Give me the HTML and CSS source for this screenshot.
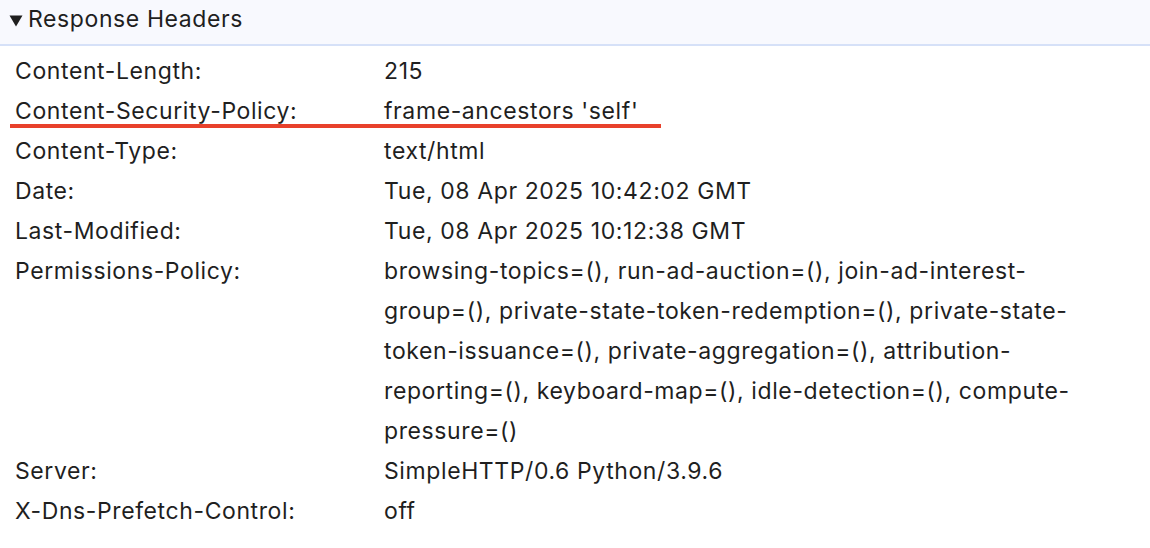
FILE: index.html
```html
<!DOCTYPE html>
<html>
<head>
<meta charset="utf-8">
<link rel="stylesheet" href="styles.css">
</head>
<body>
<section class="panel">
  <div class="panel-header">
    <svg class="caret" width="14" height="12" viewBox="0 0 14 12"><path d="M0.5 0.5 H13.5 L7 11.5 Z" fill="#1f1f1f"/></svg>
    <span class="panel-title">Response Headers</span>
  </div>
  <div class="rows">
    <div class="row"><div class="key">Content-Length:</div><div class="val">215</div></div>
    <div class="row marked"><div class="key">Content-Security-Policy:</div><div class="val">frame-ancestors 'self'</div></div>
    <div class="row"><div class="key">Content-Type:</div><div class="val">text/html</div></div>
    <div class="row"><div class="key">Date:</div><div class="val">Tue, 08 Apr 2025 10:42:02 GMT</div></div>
    <div class="row"><div class="key">Last-Modified:</div><div class="val">Tue, 08 Apr 2025 10:12:38 GMT</div></div>
    <div class="row"><div class="key">Permissions-Policy:</div><div class="val wrap">browsing-topics=(), run-ad-auction=(), join-ad-interest-group=(), private-state-token-redemption=(), private-state-token-issuance=(), private-aggregation=(), attribution-reporting=(), keyboard-map=(), idle-detection=(), compute-pressure=()</div></div>
    <div class="row"><div class="key">Server:</div><div class="val">SimpleHTTP/0.6 Python/3.9.6</div></div>
    <div class="row"><div class="key">X-Dns-Prefetch-Control:</div><div class="val">off</div></div>
  </div>
</section>
</body>
</html>
```

FILE: styles.css
```css
html, body {
  margin: 0;
  padding: 0;
  background: #ffffff;
}
body {
  font-family: Inter, "Open Sans", "Liberation Sans", sans-serif;
  font-size: 23px;
  letter-spacing: 0.6px;
  color: #1f1f1f;
}
.panel {
  width: 1150px;
}
.panel-header {
  height: 38px;
  padding-bottom: 6px;
  background: #f8f9fe;
  border-bottom: 2px solid #d6e1f8;
  display: flex;
  align-items: center;
  padding-left: 9px;
}
.caret {
  display: block;
  margin-right: 5px;
  margin-top: 3px;
}
.panel-title {
  line-height: 38px;
}
.rows {
  padding-top: 5px;
}
.row {
  display: grid;
  grid-template-columns: 369px 1fr;
  padding-left: 15px;
  line-height: 40px;
}
.val.wrap {
  max-width: 700px;
}
.row.marked {
  position: relative;
}
.row.marked::after {
  content: "";
  position: absolute;
  left: 10px;
  top: 33px;
  width: 651px;
  height: 4px;
  background: #e8412b;
}
```
